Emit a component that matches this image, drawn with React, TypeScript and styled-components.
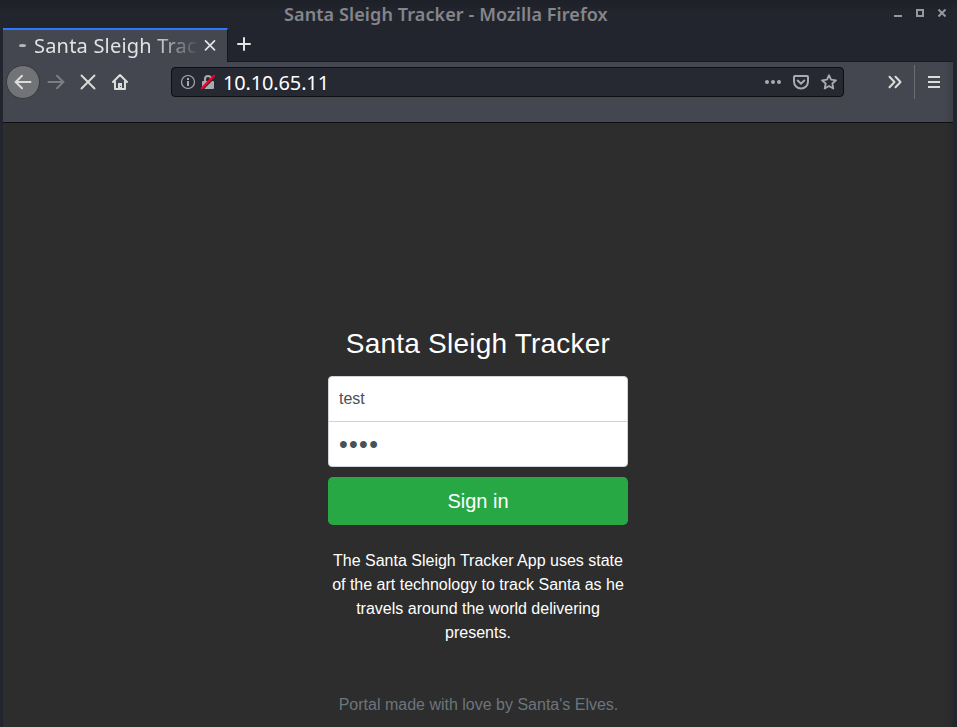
import React from "react";
import styled, { createGlobalStyle } from "styled-components";

const GlobalStyle = createGlobalStyle`
  *, *::before, *::after { box-sizing: border-box; }
  html, body { margin: 0; padding: 0; overflow: hidden; background: #23252e; }
  button, input { font: inherit; margin: 0; }
`;

const Window = styled.div`
  width: 957px;
  height: 727px;
  display: flex;
  flex-direction: column;
  padding: 0 4px 0 3px;
  background: #23252e;
  font-family: "Noto Sans", sans-serif;
  overflow: hidden;
`;

const TitleBar = styled.header`
  height: 28px;
  flex: none;
  margin: 0 -4px 0 -3px;
  display: grid;
  grid-template-columns: 1fr auto;
  background: linear-gradient(#1e2028, #23252e 12px);
`;

const WindowTitle = styled.div`
  padding: 1px 0 0 284px;
  font-size: 18px;
  line-height: 26px;
  font-weight: 600;
  letter-spacing: 0.1px;
  white-space: nowrap;
  color: #84868b;
`;

const WindowControls = styled.div`
  display: flex;
  gap: 14px;
  padding: 9px 11px 0 0;
  color: #96989c;
`;

const TabStrip = styled.div`
  height: 34px;
  flex: none;
  display: flex;
`;

const Tab = styled.div`
  width: 225px;
  height: 34px;
  display: flex;
  align-items: center;
  padding: 0 10px 1px 16px;
  border-top: 2px solid #2a7aff;
  border-right: 1px solid #15161c;
  background: #44474f;
  color: #e2e3e5;
`;

const Throbber = styled.span`
  width: 7px;
  height: 3px;
  margin-right: 8px;
  flex: none;
  border-radius: 50%;
  background: #b6b8bb;
`;

const TabLabel = styled.span`
  width: 164px;
  flex: none;
  margin-right: 5px;
  overflow: hidden;
  white-space: nowrap;
  font-size: 20px;
  line-height: 28px;
  letter-spacing: 0.2px;
  mask-image: linear-gradient(to right, #000 118px, transparent 166px);
`;

const TabRest = styled.div`
  flex: 1;
  padding: 9px 0 0 9px;
  border-bottom: 1px solid #191a20;
  color: #e2e3e5;
`;

const NavBar = styled.nav`
  height: 61px;
  flex: none;
  display: flex;
  align-items: flex-start;
  padding: 3px 0 0 3px;
  background: linear-gradient(to right, #44474f 940px, #3d4048);
  border-bottom: 1px solid #0e0f12;
`;

const NavButton = styled.button<{ $round?: boolean; $dim?: boolean }>`
  width: ${(p) => (p.$round ? 34 : 32)}px;
  height: 34px;
  padding: 0;
  flex: none;
  display: grid;
  place-items: center;
  border: ${(p) => (p.$round ? "1px solid #383a40" : "0")};
  border-radius: 50%;
  background: ${(p) => (p.$round ? "#717377" : "transparent")};
  color: ${(p) => (p.$dim ? "#7c7e83" : "#dcddda")};
`;

const UrlBar = styled.div`
  width: 673px;
  height: 30px;
  margin: 2px 35px 0 35px;
  flex: none;
  display: flex;
  align-items: center;
  padding: 0 6px 0 8px;
  border: 1px solid #0d0e12;
  border-radius: 4px;
  background: #262832;
  color: #a9abb0;
`;

const Identity = styled.div`
  display: flex;
  gap: 4px;
`;

const Address = styled.span`
  flex: 1;
  margin-left: 7px;
  padding-top: 1px;
  font-size: 20px;
  line-height: 27px;
  letter-spacing: -0.15px;
  color: #ffffff;
`;

const UrlActions = styled.div`
  display: flex;
  gap: 12px;
`;

const Divider = styled.span`
  width: 1px;
  height: 34px;
  flex: none;
  margin: 0 3px;
  background: #6b6d72;
`;

const Page = styled.main`
  flex: 1;
  min-height: 0;
  padding-top: 204px;
  background: linear-gradient(to right, #2d2d2d 940px, #292929);
  font-family: "Liberation Sans", Arial, sans-serif;
  font-size: 16px;
  line-height: 24px;
  color: #ffffff;
  text-align: center;
`;

const LoginForm = styled.form`
  width: 300px;
  margin: 0 auto 0 325px;
`;

const Heading = styled.h1`
  margin: 0 -10px 15px;
  font-size: 28px;
  line-height: 34px;
  font-weight: 400;
  letter-spacing: 0.22px;
  white-space: nowrap;
`;

const Field = styled.input`
  display: block;
  width: 100%;
  height: 46px;
  padding: 0 10px;
  border: 1px solid #ced4da;
  border-radius: 4px 4px 0 0;
  outline: none;
  background: #ffffff;
  color: #495057;
`;

const PasswordField = styled(Field)`
  margin-top: -1px;
  border-radius: 0 0 4px 4px;
  font-size: 25px;
  letter-spacing: 1.3px;
`;

const SignIn = styled.button`
  display: block;
  width: 100%;
  height: 48px;
  margin-top: 10px;
  padding: 0;
  border: 0;
  border-radius: 4.8px;
  background: #28a745;
  color: #ffffff;
  font-size: 20px;
`;

const Description = styled.p`
  margin: 24px 0 48px;
`;

const Credit = styled.p`
  margin: 0 0 0 1px;
  white-space: nowrap;
  color: #6c757d;
`;

const stroke = {
  fill: "none",
  stroke: "currentColor",
  strokeWidth: 2,
  strokeLinecap: "round" as const,
  strokeLinejoin: "round" as const,
};

const MinimizeIcon = () => (
  <svg width="8" height="8" viewBox="0 0 8 8"><path d="M0 6h8v2H0z" fill="currentColor" /></svg>
);
const MaximizeIcon = () => (
  <svg width="8" height="8" viewBox="0 0 8 8"><path d="M1 1h6v6H1z" fill="none" stroke="currentColor" strokeWidth="2" /></svg>
);
const CloseWindowIcon = () => (
  <svg width="8" height="8" viewBox="0 0 8 8"><path d="M.5.5l7 7m0-7l-7 7" stroke="currentColor" strokeWidth="2" /></svg>
);
const CloseTabIcon = () => (
  <svg width="14" height="14" viewBox="0 0 14 14"><path d="M2.5 1.8l9 9m0-9l-9 9" {...stroke} strokeWidth={1.7} /></svg>
);
const PlusIcon = () => (
  <svg width="14" height="14" viewBox="0 0 14 14" display="block"><path d="M7 1v12M1 7h12" {...stroke} /></svg>
);
const ArrowIcon = ({ forward = false }: { forward?: boolean }) => (
  <svg width="18" height="16" viewBox="0 0 18 16">
    <path d={forward ? "M1.5 8h15M10 1.8L16.3 8 10 14.2" : "M16.5 8h-15M8 1.8L1.7 8 8 14.2"} {...stroke} />
  </svg>
);
const StopIcon = () => (
  <svg width="16" height="16" viewBox="0 0 16 16"><path d="M1.5 1.5l13 13m0-13l-13 13" {...stroke} strokeWidth={1.9} /></svg>
);
const HomeIcon = () => (
  <svg width="16" height="16" viewBox="0 0 16 16">
    <path d="M1 8l7-7 7 7M3 7.5V15h10V7.5" {...stroke} />
    <path d="M6 15V9h4v6z" fill="currentColor" />
    <path d="M8 12h1v1H8z" fill="#44474f" />
  </svg>
);
const InfoIcon = () => (
  <svg width="16" height="16" viewBox="0 0 16 16">
    <circle cx="8" cy="8" r="6.5" fill="none" stroke="currentColor" strokeWidth="1.2" />
    <path d="M7 4h2v2H7zM7 7h2v5H7z" fill="currentColor" />
  </svg>
);
const InsecureIcon = () => (
  <svg width="16" height="16" viewBox="0 0 16 16">
    <path d="M5 8V5a3 3 0 0 1 6 0v3" fill="none" stroke="currentColor" strokeWidth="2" />
    <rect x="2" y="7" width="12" height="8" rx="1" fill="currentColor" />
    <path d="M2.4 15.8L15.2 2.8" stroke="#262832" strokeWidth="1.4" />
    <path d="M1.7 14.3L14.2 1.7" stroke="#f0002f" strokeWidth="2" strokeLinecap="round" />
  </svg>
);
const DotsIcon = () => (
  <svg width="16" height="16" viewBox="0 0 16 16" fill="currentColor">
    <circle cx="2" cy="8" r="2" /><circle cx="8" cy="8" r="2" /><circle cx="14" cy="8" r="2" />
  </svg>
);
const PocketIcon = () => (
  <svg width="16" height="16" viewBox="0 0 16 16">
    <path d="M2 2h12a1 1 0 0 1 1 1v4.5a7 7 0 0 1-14 0V3a1 1 0 0 1 1-1z" {...stroke} />
    <path d="M4.7 6.5L8 9.7l3.3-3.2" {...stroke} />
  </svg>
);
const StarIcon = () => (
  <svg width="16" height="16" viewBox="0 0 16 16">
    <path d="M8 1.2l2 4.5 5 .6-3.7 3.2 1 5L8 12l-4.3 2.5 1-5L1 6.3l5-.6z" {...stroke} strokeWidth={1.8} />
  </svg>
);
const OverflowIcon = () => (
  <svg width="16" height="16" viewBox="0 0 16 16"><path d="M2.5 2.8L7.5 8l-5 5.2M8.5 2.8l5 5.2-5 5.2" {...stroke} /></svg>
);
const MenuIcon = () => (
  <svg width="12" height="12" viewBox="0 0 12 12"><path d="M0 1h12M0 6h12M0 11h12" stroke="currentColor" strokeWidth="2" /></svg>
);

export default function App() {
  return (
    <>
      <GlobalStyle />
      <Window>
        <TitleBar>
          <WindowTitle>Santa Sleigh Tracker - Mozilla Firefox</WindowTitle>
          <WindowControls>
            <MinimizeIcon />
            <MaximizeIcon />
            <CloseWindowIcon />
          </WindowControls>
        </TitleBar>
        <TabStrip>
          <Tab>
            <Throbber />
            <TabLabel>Santa Sleigh Trac</TabLabel>
            <CloseTabIcon />
          </Tab>
          <TabRest><PlusIcon /></TabRest>
        </TabStrip>
        <NavBar>
          <NavButton $round aria-label="Back"><ArrowIcon /></NavButton>
          <NavButton $dim aria-label="Forward"><ArrowIcon forward /></NavButton>
          <NavButton aria-label="Stop"><StopIcon /></NavButton>
          <NavButton aria-label="Home"><HomeIcon /></NavButton>
          <UrlBar>
            <Identity>
              <InfoIcon />
              <InsecureIcon />
            </Identity>
            <Address>10.10.65.11</Address>
            <UrlActions>
              <DotsIcon />
              <PocketIcon />
              <StarIcon />
            </UrlActions>
          </UrlBar>
          <NavButton aria-label="More tools"><OverflowIcon /></NavButton>
          <Divider />
          <NavButton aria-label="Menu"><MenuIcon /></NavButton>
        </NavBar>
        <Page>
          <LoginForm onSubmit={(e) => e.preventDefault()}>
            <Heading>Santa Sleigh Tracker</Heading>
            <Field type="text" defaultValue="test" aria-label="Username" />
            <PasswordField type="password" defaultValue="test" aria-label="Password" />
            <SignIn type="submit">Sign in</SignIn>
            <Description>
              The Santa Sleigh Tracker App uses state of the art technology to track Santa as he
              travels around the world delivering presents.
            </Description>
            <Credit>Portal made with love by Santa's Elves.</Credit>
          </LoginForm>
        </Page>
      </Window>
    </>
  );
}
